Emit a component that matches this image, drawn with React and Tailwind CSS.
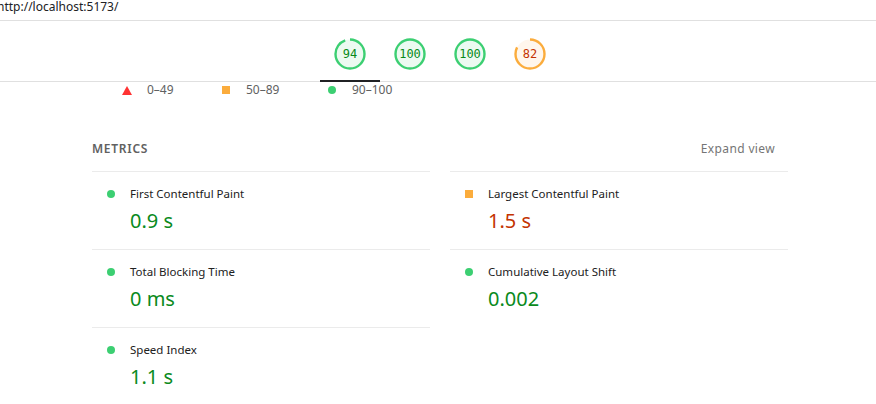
import React from "react";

const font = { fontFamily: "'Noto Sans', 'Open Sans', sans-serif" };

const gauges = [
  { score: 94, kind: "pass" },
  { score: 100, kind: "pass" },
  { score: 100, kind: "pass" },
  { score: 82, kind: "avg" },
];

const colors = {
  pass: { ring: "#3ccf72", bg: "#ecfaf1", text: "#088a1a" },
  avg: { ring: "#fbac3c", bg: "#fff6ec", text: "#c33300" },
};

function Gauge({ score, kind }) {
  const c = colors[kind];
  const r = 14.5;
  const len = 2 * Math.PI * r;
  return (
    <div className="relative w-8 h-8">
      <svg width="32" height="32" viewBox="0 0 32 32" className="absolute inset-0">
        <circle cx="16" cy="16" r={r} fill={c.bg} stroke="none" />
        <circle
          cx="16"
          cy="16"
          r={r}
          fill="none"
          stroke={c.ring}
          strokeWidth="2.4"
          strokeDasharray={`${(len * score) / 100} ${len}`}
          transform="rotate(-90 16 16)"
        />
      </svg>
      <div
        className="absolute inset-0 flex items-center justify-center text-[12px]"
        style={{ color: c.text, fontFamily: "'DejaVu Sans Mono', monospace" }}
      >
        {score}
      </div>
    </div>
  );
}

const metrics = [
  { name: "First Contentful Paint", value: "0.9 s", kind: "pass" },
  { name: "Largest Contentful Paint", value: "1.5 s", kind: "avg" },
  { name: "Total Blocking Time", value: "0 ms", kind: "pass" },
  { name: "Cumulative Layout Shift", value: "0.002", kind: "pass" },
  { name: "Speed Index", value: "1.1 s", kind: "pass" },
];

function Metric({ m }) {
  return (
    <div className="border-t border-[#ebebeb] pt-[14px] pb-[14px]">
      <div className="flex items-center h-4">
        <div className="w-[38px] pl-[15px] flex items-center">
          {m.kind === "pass" ? (
            <span className="w-2 h-2 rounded-full bg-[#3ccf72]" />
          ) : (
            <span className="w-2 h-2 bg-[#fbac3c]" />
          )}
        </div>
        <span className="text-[11.5px] text-[#212121]">{m.name}</span>
      </div>
      <div
        className="mt-[5px] pl-[38px] text-[20px] leading-[28px]"
        style={{ color: m.kind === "pass" ? "#0a8a1c" : "#c33300" }}
      >
        {m.value}
      </div>
    </div>
  );
}

export default function App() {
  return (
    <div className="w-[876px] h-[404px] bg-white overflow-hidden" style={font}>
      <div className="h-[21px] border-b border-[#e0e0e0] flex items-center">
        <span className="ml-[-3px] text-[12px] text-[#202124] leading-none mb-[6px]">
          http://localhost:5173/
        </span>
      </div>

      <div className="h-[61px] border-b border-[#e0e0e0] flex items-center justify-center gap-7 pt-[6px] pl-[4px] relative">
        {gauges.map((g, i) => (
          <Gauge key={i} {...g} />
        ))}
        <div className="absolute left-[320px] bottom-[-1px] w-[60px] h-[2px] bg-[#202124]" />
      </div>

      <div className="flex items-center h-4 text-[12px] text-[#616161]">
        <div className="flex items-center ml-[122px] w-[100px]">
          <svg width="10" height="9" viewBox="0 0 10 9">
            <polygon points="5,0 10,9 0,9" fill="#f33" />
          </svg>
          <span className="ml-[15px]">0–49</span>
        </div>
        <div className="flex items-center w-[106px]">
          <span className="w-2 h-2 bg-[#fbac3c] inline-block" />
          <span className="ml-[16px]">50–89</span>
        </div>
        <div className="flex items-center">
          <span className="w-2 h-2 rounded-full bg-[#3ccf72] inline-block" />
          <span className="ml-[16px]">90–100</span>
        </div>
      </div>

      <div className="ml-[92px] w-[696px] mt-[37px]">
        <div className="flex items-center justify-between h-9 pb-[8px]">
          <span className="text-[12px] font-semibold tracking-[0.06em] text-[#616161]">
            METRICS
          </span>
          <span className="text-[12px] text-[#757575] mr-[13px] tracking-[0.03em]">
            Expand view
          </span>
        </div>
        <div className="grid grid-cols-2 gap-x-5">
          {metrics.map((m) => (
            <Metric key={m.name} m={m} />
          ))}
        </div>
      </div>
    </div>
  );
}
